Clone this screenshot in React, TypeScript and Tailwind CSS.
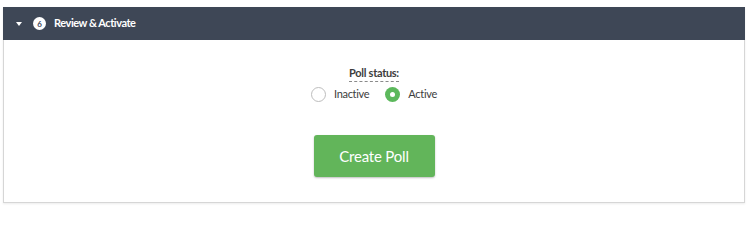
import React, { useState } from "react";

type Status = "inactive" | "active";

const Radio = ({
  checked,
  label,
  onClick,
}: {
  checked: boolean;
  label: string;
  onClick: () => void;
}) => (
  <button
    type="button"
    onClick={onClick}
    className="flex items-center gap-[8px] text-[11px] tracking-[-0.3px] text-[#3d3d3d]"
  >
    {checked ? (
      <span className="w-[15px] h-[15px] rounded-full bg-[#5cb85c] flex items-center justify-center">
        <span className="w-[5px] h-[5px] rounded-full bg-white" />
      </span>
    ) : (
      <span className="w-[15px] h-[15px] rounded-full border border-[#bdbdbd] bg-white" />
    )}
    <span>{label}</span>
  </button>
);

export default function App() {
  const [status, setStatus] = useState<Status>("active");

  return (
    <div
      className="w-[750px] h-[214px] bg-white pt-[7px] px-[3px]"
      style={{ fontFamily: 'Lato, "Open Sans", "Liberation Sans", sans-serif' }}
    >
      <div className="w-[742px] border border-[#d6d6d6] shadow-[0_1px_2px_rgba(0,0,0,0.08)]">
        <div className="h-[33px] bg-[#3e4756] flex items-center pl-[13px] -mx-px -mt-px">
          <span className="w-0 h-0 border-l-[3.5px] border-r-[3.5px] border-t-[4px] border-l-transparent border-r-transparent border-t-white" />
          <span className="ml-[11px] w-[13px] h-[13px] rounded-full bg-white text-[#3e4756] text-[8px] font-bold flex items-center justify-center leading-none">
            6
          </span>
          <span className="ml-[8px] text-white text-[11px] font-bold tracking-[-0.45px]">
            Review &amp; Activate
          </span>
        </div>
        <div className="flex flex-col items-center pt-[24px] pb-[25px]">
          <span className="text-[11px] font-bold tracking-[-0.3px] text-[#3d3d3d] leading-[17px] border-b border-dashed border-[#8a8a8a]">
            Poll status:
          </span>
          <div className="flex items-center gap-[16px] mt-[2px] h-[20px]">
            <Radio
              checked={status === "inactive"}
              label="Inactive"
              onClick={() => setStatus("inactive")}
            />
            <Radio
              checked={status === "active"}
              label="Active"
              onClick={() => setStatus("active")}
            />
          </div>
          <button
            type="button"
            className="mt-[31px] w-[121px] h-[42px] rounded-[3px] bg-[#62b55a] text-white text-[15px] tracking-[-0.2px] shadow-[0_1px_2px_rgba(0,0,0,0.25)]"
          >
            Create Poll
          </button>
        </div>
      </div>
    </div>
  );
}
